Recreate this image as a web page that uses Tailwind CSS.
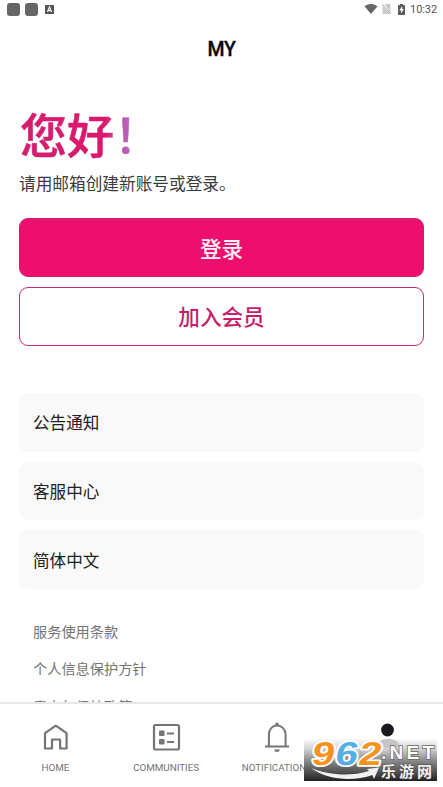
<!DOCTYPE html>
<html lang="zh-CN">
<head>
<meta charset="utf-8">
<title>MY</title>
<script src="https://cdn.jsdelivr.net/npm/@tailwindcss/browser@4"></script>
</head>
<body class="bg-white">
<div class="relative flex h-[787px] w-[443px] flex-col overflow-hidden bg-white font-['Roboto','Noto_Sans_CJK_SC',sans-serif]">
  <!-- Status bar -->
  <header class="flex h-[18px] shrink-0 items-center justify-between pr-[6px] pl-[7px]">
    <div class="flex items-center gap-[5px]">
      <span class="size-[13px] rounded-[3px] bg-[#666]"></span>
      <span class="size-[13px] rounded-[3px] bg-[#666]"></span>
      <svg class="ml-[2px] size-[9px]" viewBox="0 0 9 9"><path fill="#555" d="M0 0h9v9H0z"/><path d="M2.4 7 4.5 2l2.1 5M3.2 5.6h2.6" fill="none" stroke="#fff" stroke-width="1.1"/></svg>
    </div>
    <div class="flex items-center">
      <svg class="h-[10px] w-[14px]" viewBox="0 0 14 10"><path fill="#666" d="M.5 2.2Q7-2.3 13.500 2.200L7 10z"/></svg>
      <svg class="ml-[4px] h-[10px] w-[9px]" viewBox="0 0 9 10"><path fill="#c9c9c9" d="M2.500 0H8.500V9zM.5 2 8 10H.5z"/><path d="M.3.5 8.700 9.800" stroke="#999" stroke-width=".9"/></svg>
      <svg class="ml-[7px] h-[11px] w-[7px]" viewBox="0 0 7 11"><path fill="#5b5b5b" d="M2 0h3v1h1.300q.7 0 .7.7v8.600q0 .7-.7.7H.7Q0 11 0 10.300V1.700Q0 1 .7 1H2z"/><path fill="#fff" d="M4.200 2 1.300 6.500h1.800v3L5.800 5H4.200z"/></svg>
      <span class="ml-[5px] pt-px text-[11px] leading-[18px] tracking-[-0.1px] text-[#555]">10:32</span>
    </div>
  </header>

  <h1 class="mt-[21px] h-[22px] shrink-0 text-center text-[19.5px] leading-[22px] font-medium tracking-[-0.3px] text-[#080814] [-webkit-text-stroke:0.3px_#080814]">MY</h1>

  <main class="flex min-h-0 flex-1 flex-col overflow-hidden px-[19px] pt-[41px]">
    <h2 class="h-[62px] w-[141px] shrink-0 bg-[linear-gradient(90deg,#d2206d_0%,#dc176d_60%,#c6529f_71%,#ad67c8_80%)] bg-clip-text pl-px font-['Noto_Sans_CJK_SC',sans-serif] text-[47px] leading-[62px] font-medium whitespace-nowrap text-transparent [-webkit-text-stroke:0.6px_transparent]">您好！</h2>
    <p class="mt-[7px] h-[24px] shrink-0 font-['Noto_Sans_CJK_SC',sans-serif] text-[16.7px] leading-[24px] tracking-[-0.02px] whitespace-nowrap text-[#3b3b3b]">请用邮箱创建新账号或登录。</p>
    <button class="mt-[23px] h-[59px] w-[405px] shrink-0 rounded-[9px] border border-[#c92171] bg-[#ed0e6d] pt-[5px] text-[21.6px] font-medium text-[#fff0f8]">登录</button>
    <button class="mt-[10px] h-[59px] w-[405px] shrink-0 rounded-[9px] border border-[#c62978] bg-white pt-[3px] text-[21.6px] font-medium text-[#c51f6a]">加入会员</button>

    <nav class="mt-[47px] flex shrink-0 flex-col gap-[10px] text-[16.6px] text-[#202020]">
      <a class="flex h-[58.6px] items-center rounded-[9px] bg-[#f9f9f9] pt-[5px] pl-[14px]">公告通知</a>
      <a class="flex h-[58.6px] items-center rounded-[9px] bg-[#f9f9f9] pt-[5px] pl-[14px]">客服中心</a>
      <a class="flex h-[58.6px] items-center rounded-[9px] bg-[#f9f9f9] pt-[5px] pl-[14px]">简体中文</a>
    </nav>

    <div class="mt-[33px] flex shrink-0 flex-col gap-[17.500px] pl-[14px] text-[14.2px] leading-[20px] text-[#747474]">
      <a>服务使用条款</a>
      <a>个人信息保护方针</a>
      <a>青少年保护政策</a>
    </div>
  </main>

  <!-- Bottom tabs -->
  <footer class="grid h-[85px] shrink-0 grid-cols-4 border-t-2 border-[#e8e8e8] bg-white text-[9.800px] leading-[12px] text-[#737373]">
    <div class="flex flex-col items-center pt-[19px]">
      <svg class="h-[28px] w-[30px]" viewBox="0 0 30 28" fill="none" stroke="#757575" stroke-width="2.200" stroke-linejoin="round"><path d="M5 10.200 15.800 2.700 26.600 10.200V25.500H20.100V16.500H12V25.500H5z"/></svg>
      <span class="mt-[11px]">HOME</span>
    </div>
    <div class="flex flex-col items-center pt-[19px]">
      <svg class="h-[28px] w-[30px]" viewBox="0 0 30 28"><rect x="3" y="2" width="25" height="24.500" rx="1.700" fill="none" stroke="#757575" stroke-width="2.200"/><rect x="8" y="7.600" width="5.500" height="5.500" rx="1" fill="#757575"/><rect x="8" y="16.100" width="5.500" height="5.500" rx="1" fill="#757575"/><path fill="#757575" d="M16 9.400h7v2h-7zM16 18h7v2h-7z"/></svg>
      <span class="mt-[11px]">COMMUNITIES</span>
    </div>
    <div class="flex flex-col items-center pt-[17px]">
      <svg class="h-[32px] w-[26px]" viewBox="0 0 26 32"><path d="M4.900 25V13.500C4.900 8.300 8.300 4.600 13 4.600S21.600 8.300 21.600 13.500V25M1 25.500H25" fill="none" stroke="#757575" stroke-width="2"/><path fill="#757575" d="M11.300 4V2.600q1.700-2 3.400 0V4zM10 28.500h6q-.7 2.500-3 2.500t-3-2.500z"/></svg>
      <span class="mt-[9px]">NOTIFICATIONS</span>
    </div>
    <div class="flex flex-col items-center pt-[18px]">
      <svg class="h-[28px] w-[30px]" viewBox="0 0 30 28"><circle cx="14.500" cy="8" r="6.400" fill="#19191f"/></svg>
    </div>
  </footer>

  <!-- Site badge floating over the tabs -->
  <svg class="absolute top-[738px] left-[304px] h-[43px] w-[133px]" viewBox="0 0 133 43">
    <defs>
      <linearGradient id="shade" x1="0" y1="0" x2="0" y2="1"><stop offset="0" stop-color="#fff"/><stop offset=".25" stop-color="#d2d2d2"/><stop offset=".5" stop-color="#929292"/><stop offset=".75" stop-color="#505050" stop-opacity=".94"/><stop offset="1" stop-color="#202020"/></linearGradient>
    </defs>
    <path fill="url(#shade)" d="M0 0h133v43H0z"/>
    <path fill="#c4c4c4" d="M71 10C73 3 78 1 84 1s11 2 12 8z"/>
    <path d="M7 30C24 37 46 39 65 33L63 31 75 29.500 70 41 68.500 37C49 44 23 42 7 30z" fill="#f1f1f1"/>
    <g font-family="Liberation Sans, sans-serif" font-weight="700" font-size="33" stroke="#fff" stroke-width="3.500" stroke-linejoin="round" paint-order="stroke" transform="translate(6.500 27) skewX(-10)">
      <text textLength="22.500" lengthAdjust="spacingAndGlyphs" fill="#f6921e">9</text>
      <text x="23.500" textLength="22.500" lengthAdjust="spacingAndGlyphs" fill="#55aee5">6</text>
      <text x="47" textLength="22.500" lengthAdjust="spacingAndGlyphs" fill="#f6921e">2</text>
    </g>
    <text x="77" y="21" textLength="53" font-family="Liberation Sans, sans-serif" font-weight="700" font-size="19" fill="#fff" stroke="#666" stroke-width="1.500" paint-order="stroke">.NET</text>
    <text x="77" y="38.500" textLength="51" font-family="Noto Sans CJK SC, sans-serif" font-weight="700" font-size="15" fill="#f2f2f2" stroke="#444" stroke-width="1" paint-order="stroke">乐游网</text>
  </svg>
</div>
</body>
</html>
